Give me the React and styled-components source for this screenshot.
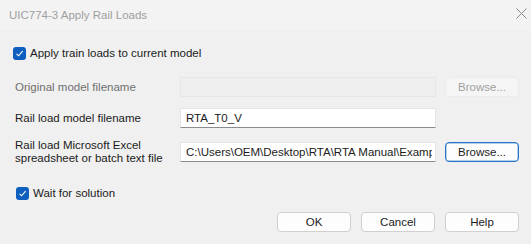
import React from "react";
import styled, { createGlobalStyle } from "styled-components";

const GlobalStyle = createGlobalStyle`
  html, body {
    margin: 0;
    padding: 0;
    background: #f0f0f0;
  }
  * {
    box-sizing: border-box;
  }
`;

function CheckBox({ checked }) {
  return (
    <Box $checked={checked}>
      {checked && (
        <svg width="9" height="9" viewBox="0 0 9 9">
          <path d="M1.5 4.8 L3.6 6.8 L7.6 2.2" fill="none" stroke="#fff" strokeWidth="1.1" />
        </svg>
      )}
    </Box>
  );
}

function App() {
  return (
    <Dialog>
      <GlobalStyle />
      <TitleBar>
        <Title>UIC774-3 Apply Rail Loads</Title>
        <CloseIcon width="11" height="11" viewBox="0 0 11 11">
          <path d="M0.5 0.5 L10.5 10.5 M10.5 0.5 L0.5 10.5" stroke="#8a8a8a" strokeWidth="1" />
        </CloseIcon>
      </TitleBar>
      <Body>
        <CheckRow $left={13}>
          <CheckBox checked />
          <CheckLabel>Apply train loads to current model</CheckLabel>
        </CheckRow>

        <Form>
          <FieldLabel $disabled>Original model filename</FieldLabel>
          <TextInput $disabled value="" readOnly disabled />
          <Button $disabled>Browse...</Button>

          <FieldLabel>Rail load model filename</FieldLabel>
          <TextInput value="RTA_T0_V" readOnly />
          <span />

          <FieldLabel>
            Rail load Microsoft Excel
            <br />
            spreadsheet or batch text file
          </FieldLabel>
          <TextInput value="C:\Users\OEM\Desktop\RTA\RTA Manual\Examp" readOnly />
          <Button $focused>Browse...</Button>
        </Form>

        <CheckRow $left={16} $top={22}>
          <CheckBox checked />
          <CheckLabel>Wait for solution</CheckLabel>
        </CheckRow>

        <Actions>
          <Button>OK</Button>
          <Button>Cancel</Button>
          <Button>Help</Button>
        </Actions>
      </Body>
    </Dialog>
  );
}

const Dialog = styled.div`
  width: 531px;
  height: 244px;
  background: #f0f0f0;
  font-family: "Liberation Sans", Arial, sans-serif;
  font-size: 11.5px;
  color: #1b1b1b;
  display: flex;
  flex-direction: column;
  overflow: hidden;
`;

const TitleBar = styled.div`
  height: 30px;
  flex: none;
  background: #f3f3f3;
  display: flex;
  align-items: center;
  justify-content: space-between;
  padding: 0 4px 1px 9px;
`;

const Title = styled.div`
  color: #a0a0a0;
  font-size: 11.5px;
`;

const CloseIcon = styled.svg`
  display: block;
  margin-bottom: 2px;
`;

const Body = styled.div`
  display: flex;
  flex-direction: column;
  padding-top: 16px;
`;

const CheckRow = styled.div`
  display: flex;
  align-items: center;
  gap: 4px;
  height: 14px;
  padding-left: ${(p) => p.$left}px;
  margin-top: ${(p) => p.$top || 0}px;
`;

const Box = styled.div`
  width: 13px;
  height: 13px;
  border-radius: 3px;
  background: ${(p) => (p.$checked ? "#0f5fbf" : "#fff")};
  display: flex;
  align-items: center;
  justify-content: center;
`;

const CheckLabel = styled.span`
  color: #1b1b1b;
`;

const Form = styled.div`
  display: grid;
  grid-template-columns: 156px 256px 74px;
  column-gap: 9px;
  row-gap: 11px;
  padding-left: 15px;
  margin-top: 17px;
  align-items: center;
`;

const FieldLabel = styled.div`
  color: ${(p) => (p.$disabled ? "#6f6f6f" : "#1b1b1b")};
  line-height: 13px;
  margin-bottom: -1px;
`;

const TextInput = styled.input`
  height: 20px;
  width: 100%;
  font: inherit;
  color: #1b1b1b;
  padding: 0 3px 0 5px;
  border: 1px solid ${(p) => (p.$disabled ? "#e6e6e6" : "#e5e5e5")};
  border-bottom-color: ${(p) => (p.$disabled ? "#e6e6e6" : "#8c8c8c")};
  background: ${(p) => (p.$disabled ? "#efefef" : "#fff")};
  outline: none;
`;

const Button = styled.button`
  height: 20px;
  width: 74px;
  font: inherit;
  padding: 0;
  border-radius: 4px;
  color: ${(p) => (p.$disabled ? "#a0a0a0" : "#1b1b1b")};
  background: ${(p) => (p.$disabled ? "#f5f5f5" : "#fdfdfd")};
  border: 1px solid
    ${(p) => (p.$disabled ? "#ebebeb" : p.$focused ? "#2a73c8" : "#d0d0d0")};
  box-shadow: ${(p) => (p.$focused ? "inset 0 0 0 0.5px #6aa2de" : "none")};
`;

const Actions = styled.div`
  display: flex;
  justify-content: flex-end;
  gap: 10px;
  padding-right: 12px;
  margin-top: 12px;
`;

export default App;
